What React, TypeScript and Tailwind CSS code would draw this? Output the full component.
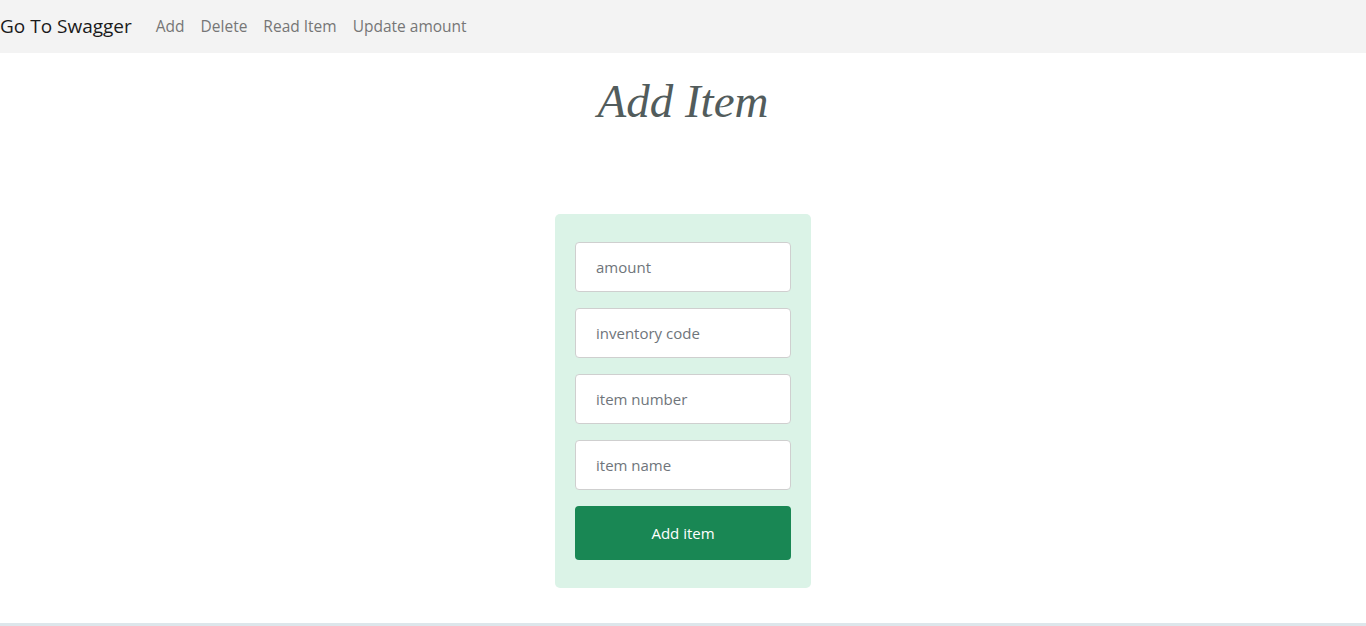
import React from 'react';

const fields = ['amount', 'inventory code', 'item number', 'item name'];
const links = ['Add', 'Delete', 'Read Item', 'Update amount'];

export default function App() {
  return (
    <div className="flex h-[626px] flex-col bg-white font-['Open_Sans',sans-serif]">
      {/* Navbar */}
      <nav className="flex h-[53px] shrink-0 items-center bg-[#f3f3f3]">
        <a className="mr-4 text-[19px] text-[#1a1a1a]">Go To Swagger</a>
        <div className="flex">
          {links.map((l) => (
            <a key={l} className="px-2 text-[15.5px] text-[#767676]">
              {l}
            </a>
          ))}
        </div>
      </nav>

      {/* Main */}
      <main className="flex flex-1 flex-col items-center">
        <h1 className="mt-[22px] font-['Liberation_Serif',serif] text-[47px] italic leading-[52px] text-[#525c5c]">
          Add Item
        </h1>

        <form className="mt-[87px] flex w-[256px] flex-col gap-4 rounded-[5px] bg-[#dbf3e7] px-5 py-7">
          {fields.map((f) => (
            <input
              key={f}
              placeholder={f}
              className="h-[50px] w-full rounded border border-[#cfcfcf] bg-white px-5 text-[15px] placeholder:text-[#6f757b] outline-none"
            />
          ))}
          <button
            type="button"
            className="h-[54px] w-full rounded bg-[#198754] text-[15px] text-white"
          >
            Add item
          </button>
        </form>
      </main>

      <div className="h-[3px] shrink-0 bg-[#dde6eb]" />
    </div>
  );
}
